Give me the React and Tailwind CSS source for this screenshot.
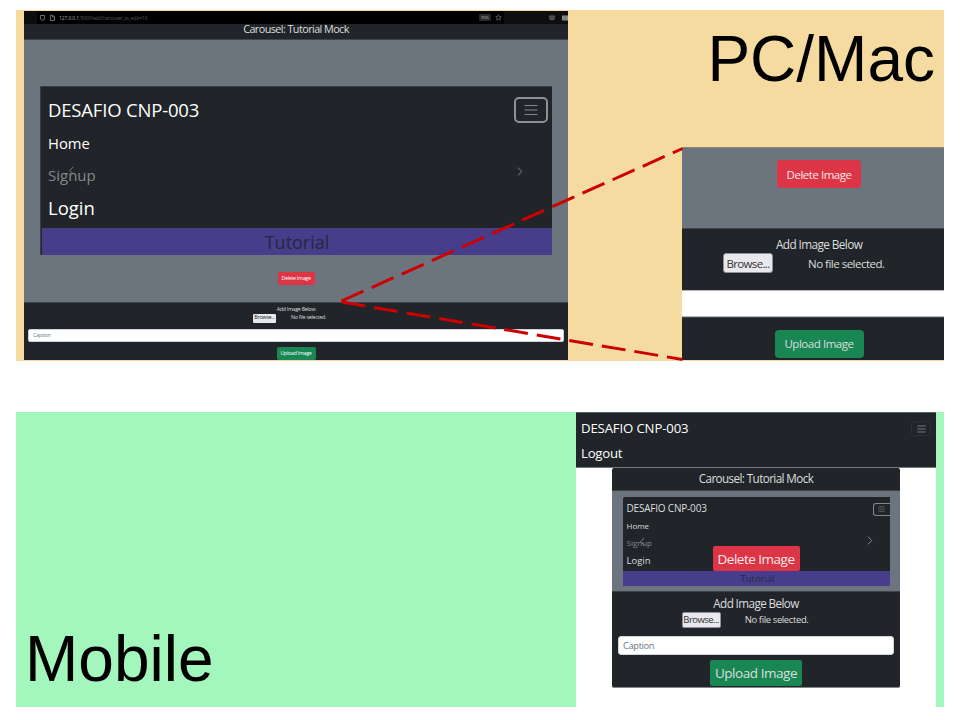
import React from "react";

function Bars({ className, thick = 1 }) {
  return (
    <svg viewBox="0 0 14 12" className={className} stroke="currentColor" strokeWidth={thick} fill="none">
      <path d="M0.5 1.5H13.5M0.5 6H13.5M0.5 10.5H13.5" />
    </svg>
  );
}

function Chevron({ className, left }) {
  return (
    <svg viewBox="0 0 6 10" className={className} stroke="currentColor" strokeWidth="1.1" fill="none">
      <path d={left ? "M5.3 0.7L1 5L5.3 9.3" : "M0.7 0.7L5 5L0.7 9.3"} />
    </svg>
  );
}

function Row({ className = "", children }) {
  return <div className={`flex shrink-0 items-center whitespace-nowrap ${className}`}>{children}</div>;
}

function BrowserBar() {
  return (
    <Row className="h-[13px] bg-black text-[#8a8a8a]">
      <div className="h-full w-[13px] bg-[#0d0d0d]" />
      <svg viewBox="0 0 24 8" className="ml-[2px] h-[8px] w-[24px]" stroke="#8a8a8a" strokeWidth="0.8" fill="none">
        <path d="M1.4 1.5h4.2v2.6a2.1 2.1 0 0 1-4.2 0zM11.4 1.2h2.4l1.6 1.6v3.8h-4zM13.6 1.4v1.6h1.6" />
      </svg>
      <span className="-ml-[4px] w-[110px] text-[5px] leading-[8px] tracking-[-0.12px] text-[#5a5a5a]">
        <span className="text-[#a8a8a8]">127.0.0.1</span>:5000/edit?carousel_to_edit=10
      </span>
      <div className="ml-auto flex h-[7px] w-[12px] items-center justify-center rounded-[1px] bg-[#2a2a2a] text-[4px] leading-none text-[#bdbdbd]">90%</div>
      <svg viewBox="0 0 10 10" className="ml-[4px] mr-[2px] h-[7px] w-[7px]" stroke="#777" fill="none">
        <path d="M5 1l1.2 2.6 2.8.3-2.1 1.9.6 2.9L5 7.3 2.500 8.700l.6-2.900L1 3.900l2.800-.3z" />
      </svg>
      <div className="flex h-full w-[64px] items-center justify-end bg-[#0e0e0e]">
        <svg viewBox="0 0 20 8" className="h-[8px] w-[20px]">
          <path d="M1 1.500h6v2a3 3 0 0 1-6 0z" fill="#555" />
          <path d="M2.500 3.200L4 4.500l1.500-1.300" stroke="#222" strokeWidth="0.7" fill="none" />
          <path d="M14 1.500h6v5h-6z" fill="#8d8d8d" />
          <path d="M15.800 1.500v5M17.800 1.500v5" stroke="#555" strokeWidth="0.4" />
        </svg>
      </div>
    </Row>
  );
}

function DesktopShot() {
  return (
    <div className="flex h-[349px] w-[544px] shrink-0 flex-col bg-[#212529] text-white">
      <BrowserBar />
      <Row className="h-[16px] justify-center border-b border-[#3d444a] pb-[4px] text-[10.8px] tracking-[-0.56px] text-[#dcdddd]">
        <span>Carousel: Tutorial Mock</span>
      </Row>
      <div className="flex h-[262px] shrink-0 flex-col items-center bg-[#6c757d] pt-[46px]">
        <div className="flex h-[169px] w-[512px] shrink-0 flex-col border-t border-l border-[#3a4046] bg-[#212529] pl-px">
          <Row className="h-[46px] justify-between pl-[6px] pr-[4px] text-[18.5px] tracking-[-0.18px]">
            <span>DESAFIO CNP-003</span>
            <div className="flex h-[26px] w-[34px] items-center justify-center rounded-[5px] border-[2.5px] border-[#8f9294] text-[#85888a]">
              <Bars className="h-[12px] w-[14px]" />
            </div>
          </Row>
          <Row className="h-[20px] pl-[6px] text-[14.8px]"><span>Home</span></Row>
          <Row className="h-[44px] justify-between pl-[6px] pr-[29px] text-[15px] text-[#85888a]">
            <div className="flex">
              <span>Signup</span>
              <Chevron left className="-ml-[27px] mt-[2px] h-[9px] w-[5px]" />
            </div>
            <Chevron className="-mt-[7px] h-[9px] w-[6px]" />
          </Row>
          <Row className="h-[31px] pb-[9px] pl-[6px] text-[18.5px]"><span>Login</span></Row>
          <Row className="h-[27px] justify-center bg-[#483d8b] pt-[2px] text-[18px] text-[#252842]"><span>Tutorial</span></Row>
        </div>
        <Row className="mt-[17px] h-[13px] w-[37px] justify-center rounded-[2px] bg-[#dc3545] text-[5.3px] tracking-[-0.28px]"><span>Delete Image</span></Row>
      </div>
      <div className="flex flex-1 flex-col items-center border-t border-[#3d444a] pt-[3px]">
        <Row className="h-[7px] text-[5.3px] tracking-[-0.28px] text-[#dcdddd]"><span>Add Image Below</span></Row>
        <Row className="h-[10px] w-[86px] text-[5.3px] tracking-[-0.24px] text-[#dcdddd]">
          <div className="flex h-[9px] w-[23px] items-center justify-center rounded-[1px] bg-[#e9e9ed] text-[#222]">Browse...</div>
          <span className="ml-[15px]">No file selected.</span>
        </Row>
        <Row className="mt-[6px] h-[13px] w-[536px] rounded-[2px] border border-[#ced4da] bg-white pl-[4px] text-[5.3px] tracking-[-0.24px] text-[#6c757d]"><span>Caption</span></Row>
        <Row className="mt-[5px] h-[13px] w-[39px] justify-center rounded-[2px] bg-[#198754] text-[5.3px] tracking-[-0.28px]"><span>Upload Image</span></Row>
      </div>
    </div>
  );
}

function DetailShot() {
  return (
    <div className="flex h-[213px] w-full flex-col bg-[#212529] text-[#dcdddd]">
      <div className="flex h-[81px] shrink-0 justify-center border-t border-[#858678] bg-[#6c757d] pt-[12px] pl-[12px]">
        <Row className="h-[28px] w-[84px] justify-center rounded-[4px] bg-[#dc3545] pt-px text-[11.5px] tracking-[-0.48px] text-[#fbe9eb]"><span>Delete Image</span></Row>
      </div>
      <div className="h-[62px] shrink-0 border-t border-[#3d444a] pl-[41px] pt-[7px]">
        <Row className="h-[17px] pl-[53px] text-[11.8px] tracking-[-0.6px]"><span>Add Image Below</span></Row>
        <Row className="h-[20px] text-[11.5px] tracking-[-0.5px]">
          <div className="flex h-[20px] w-[50px] items-center justify-center rounded-[3px] border border-[#8f8f9d] bg-[#e9e9ed] pt-px tracking-[-0.65px] text-[#333]">Browse...</div>
          <span className="ml-[35px] pt-px">No file selected.</span>
        </Row>
      </div>
      <div className="h-[27px] shrink-0 border-y border-[#b5b8bb] bg-white" />
      <div className="flex flex-1 justify-center border-t border-[#3d444a] pl-[12px] pt-[12px]">
        <Row className="h-[28px] w-[89px] justify-center rounded-[4px] bg-[#198754] text-[11.5px] tracking-[-0.45px]"><span>Upload Image</span></Row>
      </div>
    </div>
  );
}

function MobileShot() {
  return (
    <div className="flex h-full w-[360px] flex-col items-center bg-white text-white">
      <div className="h-[56px] w-full shrink-0 border-y border-t-[#4b6a5c] border-b-[#75787b] bg-[#212529] px-[5px] pt-[3px]">
        <Row className="h-[25px] justify-between text-[13.2px] tracking-[-0.15px]">
          <span>DESAFIO CNP-003</span>
          <div className="flex h-[15px] w-[20px] items-center justify-center rounded-[3px] border border-[#2c3034] text-[#74777a]">
            <Bars className="h-[8px] w-[9px]" thick={1.6} />
          </div>
        </Row>
        <Row className="h-[25px] text-[13.2px] tracking-[-0.25px]"><span>Logout</span></Row>
      </div>
      <div className="flex h-[220px] w-[288px] shrink-0 flex-col rounded-[2px] border-b border-[#85888a] bg-[#212529] text-[#dcdddd]">
        <Row className="h-[22px] justify-center text-[11.7px] tracking-[-0.6px]"><span>Carousel: Tutorial Mock</span></Row>
        <div className="flex h-[101px] shrink-0 flex-col items-center border-t border-[#3d444a] bg-[#6c757d] pt-[6px]">
          <div className="relative flex h-[89px] w-[267px] flex-col rounded-tl-[2px] bg-[#212529]">
            <Row className="h-[23px] justify-between pl-[4px] text-[10px] tracking-[-0.2px]">
              <span>DESAFIO CNP-003</span>
              <div className="mt-px flex h-[13px] w-[17px] items-center justify-center rounded-l-[3px] border border-r-0 border-[#85888a] text-[#66696c]">
                <Bars className="h-[6px] w-[7px]" thick={1.6} />
              </div>
            </Row>
            <Row className="h-[12px] pl-[4px] text-[8px]"><span>Home</span></Row>
            <Row className="h-[22px] justify-between pl-[4px] pr-[17px] text-[8px] text-[#85888a]">
              <div className="flex items-center">
                <span>Signup</span>
                <Chevron left className="-ml-[12px] -mt-[4px] h-[9px] w-[5px]" />
              </div>
              <Chevron className="-mt-[5px] h-[9px] w-[6px]" />
            </Row>
            <Row className="h-[17px] pb-[2px] pl-[4px] text-[9.5px]"><span>Login</span></Row>
            <Row className="h-[15px] justify-center bg-[#483d8b] pl-[3px] pt-px text-[9.5px] text-[#252842]"><span>Tutorial</span></Row>
            <Row className="absolute left-[90px] top-[49px] h-[25px] w-[87px] justify-center rounded-[2px] bg-[#dc3545] pt-[2px] text-[13.5px] tracking-[-0.5px] text-[#fbe9eb]"><span>Delete Image</span></Row>
          </div>
        </div>
        <div className="flex flex-1 flex-col items-center border-t border-[#3d444a] pt-[5px]">
          <Row className="h-[14px] text-[11.7px] tracking-[-0.6px]"><span>Add Image Below</span></Row>
          <Row className="ml-[-22px] h-[17px] w-[127px] text-[9.5px] tracking-[-0.38px]">
            <div className="flex h-[16px] w-[40px] items-center justify-center rounded-[2px] border border-[#8f8f9d] bg-[#e9e9ed] pt-px tracking-[-0.55px] text-[#333]">Browse...</div>
            <span className="ml-[24px] pt-px">No file selected.</span>
          </Row>
          <Row className="mt-[8px] h-[19px] w-[276px] rounded-[3px] border border-[#ced4da] bg-white pl-[4px] text-[9.3px] tracking-[-0.35px] text-[#6c757d]"><span>Caption</span></Row>
          <Row className="mt-[5px] h-[26px] w-[92px] justify-center rounded-[2px] bg-[#198754] pt-px text-[13.5px] tracking-[-0.45px]"><span>Upload Image</span></Row>
        </div>
      </div>
    </div>
  );
}

export default function App() {
  return (
    <main className="relative flex h-[720px] w-[960px] flex-col overflow-hidden bg-white px-4 pt-[10px] font-['Open_Sans','Noto_Sans',sans-serif]">
      <section className="flex h-[351px] shrink-0 bg-[#f6dba1] pl-2 pt-px">
        <DesktopShot />
        <div className="flex w-[376px] flex-col">
          <h1 className="h-[136px] pr-[9px] pt-[11px] text-right font-['Liberation_Sans',Arial,sans-serif] text-[64px] leading-[74px] text-black">PC/Mac</h1>
          <div className="pl-[114px]"><DetailShot /></div>
        </div>
      </section>
      <section className="mt-[51px] flex h-[295px] shrink-0 justify-between bg-[#a3f7bc] pr-2">
        <h1 className="self-end pb-[11px] pl-[9px] font-['Liberation_Sans',Arial,sans-serif] text-[64px] leading-[74px] text-black">Mobile</h1>
        <MobileShot />
      </section>
      <svg viewBox="0 0 960 720" className="pointer-events-none absolute inset-0 h-[720px] w-[960px]" stroke="#cc0000" strokeWidth="3" strokeDasharray="24 9" fill="none">
        <path d="M341.5 301L682.5 148.5" />
        <path d="M341.5 302L682.5 359.5" />
      </svg>
    </main>
  );
}
